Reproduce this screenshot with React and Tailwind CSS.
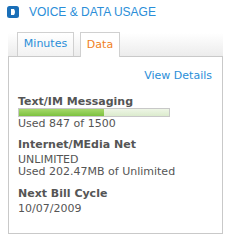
export default function App() {
    const used = 847;
    const total = 1500;

    return (
        <div className="w-[229px] h-[243px] bg-white pl-[8px] pr-[6px] font-['DejaVu_Sans',Verdana,sans-serif] text-[#555]">
            <div className="flex items-center gap-[10px] pt-[6px]">
                <svg width="12" height="12" viewBox="0 0 12 12" className="-ml-[1px]">
                    <rect x="0" y="0" width="12" height="12" rx="2.5" fill="#1a6fb8" />
                    <path d="M4 3 L7 3 Q9 6 7 9 L4 9 Z" fill="#fff" />
                </svg>
                <span className="font-['Liberation_Sans',Arial,sans-serif] text-[12px] leading-[12px] text-[#2a8ed8]">VOICE &amp; DATA USAGE</span>
            </div>

            <div className="mt-[15px] h-[24px] flex items-end pl-[9px] gap-[6px] bg-gradient-to-b from-white to-[#ececec] border-b border-[#c9c9c9]">
                <div className="h-[24px] w-[57px] border border-b-0 border-[#d0d0d0] bg-gradient-to-b from-white to-[#f2f2f2] flex items-center justify-center text-[11px] text-[#2a8ed8]">
                    Minutes
                </div>
                <div className="h-[25px] -mb-[1px] w-[40px] border border-b-0 border-[#d0d0d0] bg-white flex items-center justify-center text-[11px] text-[#f07f1e]">
                    Data
                </div>
            </div>

            <div className="h-[177px] border border-t-0 border-[#c9c9c9] px-[9px] pt-[13px] text-[11px] leading-[12px]">
                <div className="text-right text-[#2a8ed8] pr-[1px]">View Details</div>

                <div className="mt-[14px] font-bold">Text/IM Messaging</div>
                <div className="w-[152px] h-[9px] border border-[#c8c8c8] bg-gradient-to-b from-[#eef6e6] to-[#dcebcd]">
                    {/* bar width comes from the usage numbers */}
                    <div className="h-full bg-gradient-to-b from-[#a6d96a] to-[#7cc13e]" style={{ width: `${(used / total) * 100}%` }}></div>
                </div>
                <div className="mt-[1px]">Used {used} of {total}</div>

                <div className="mt-[9px] font-bold">Internet/MEdia Net</div>
                <div className="mt-[3px]">UNLIMITED</div>
                <div>Used 202.47MB of Unlimited</div>

                <div className="mt-[10px] font-bold">Next Bill Cycle</div>
                <div className="mt-[3px]">10/07/2009</div>
            </div>
        </div>
    );
}
